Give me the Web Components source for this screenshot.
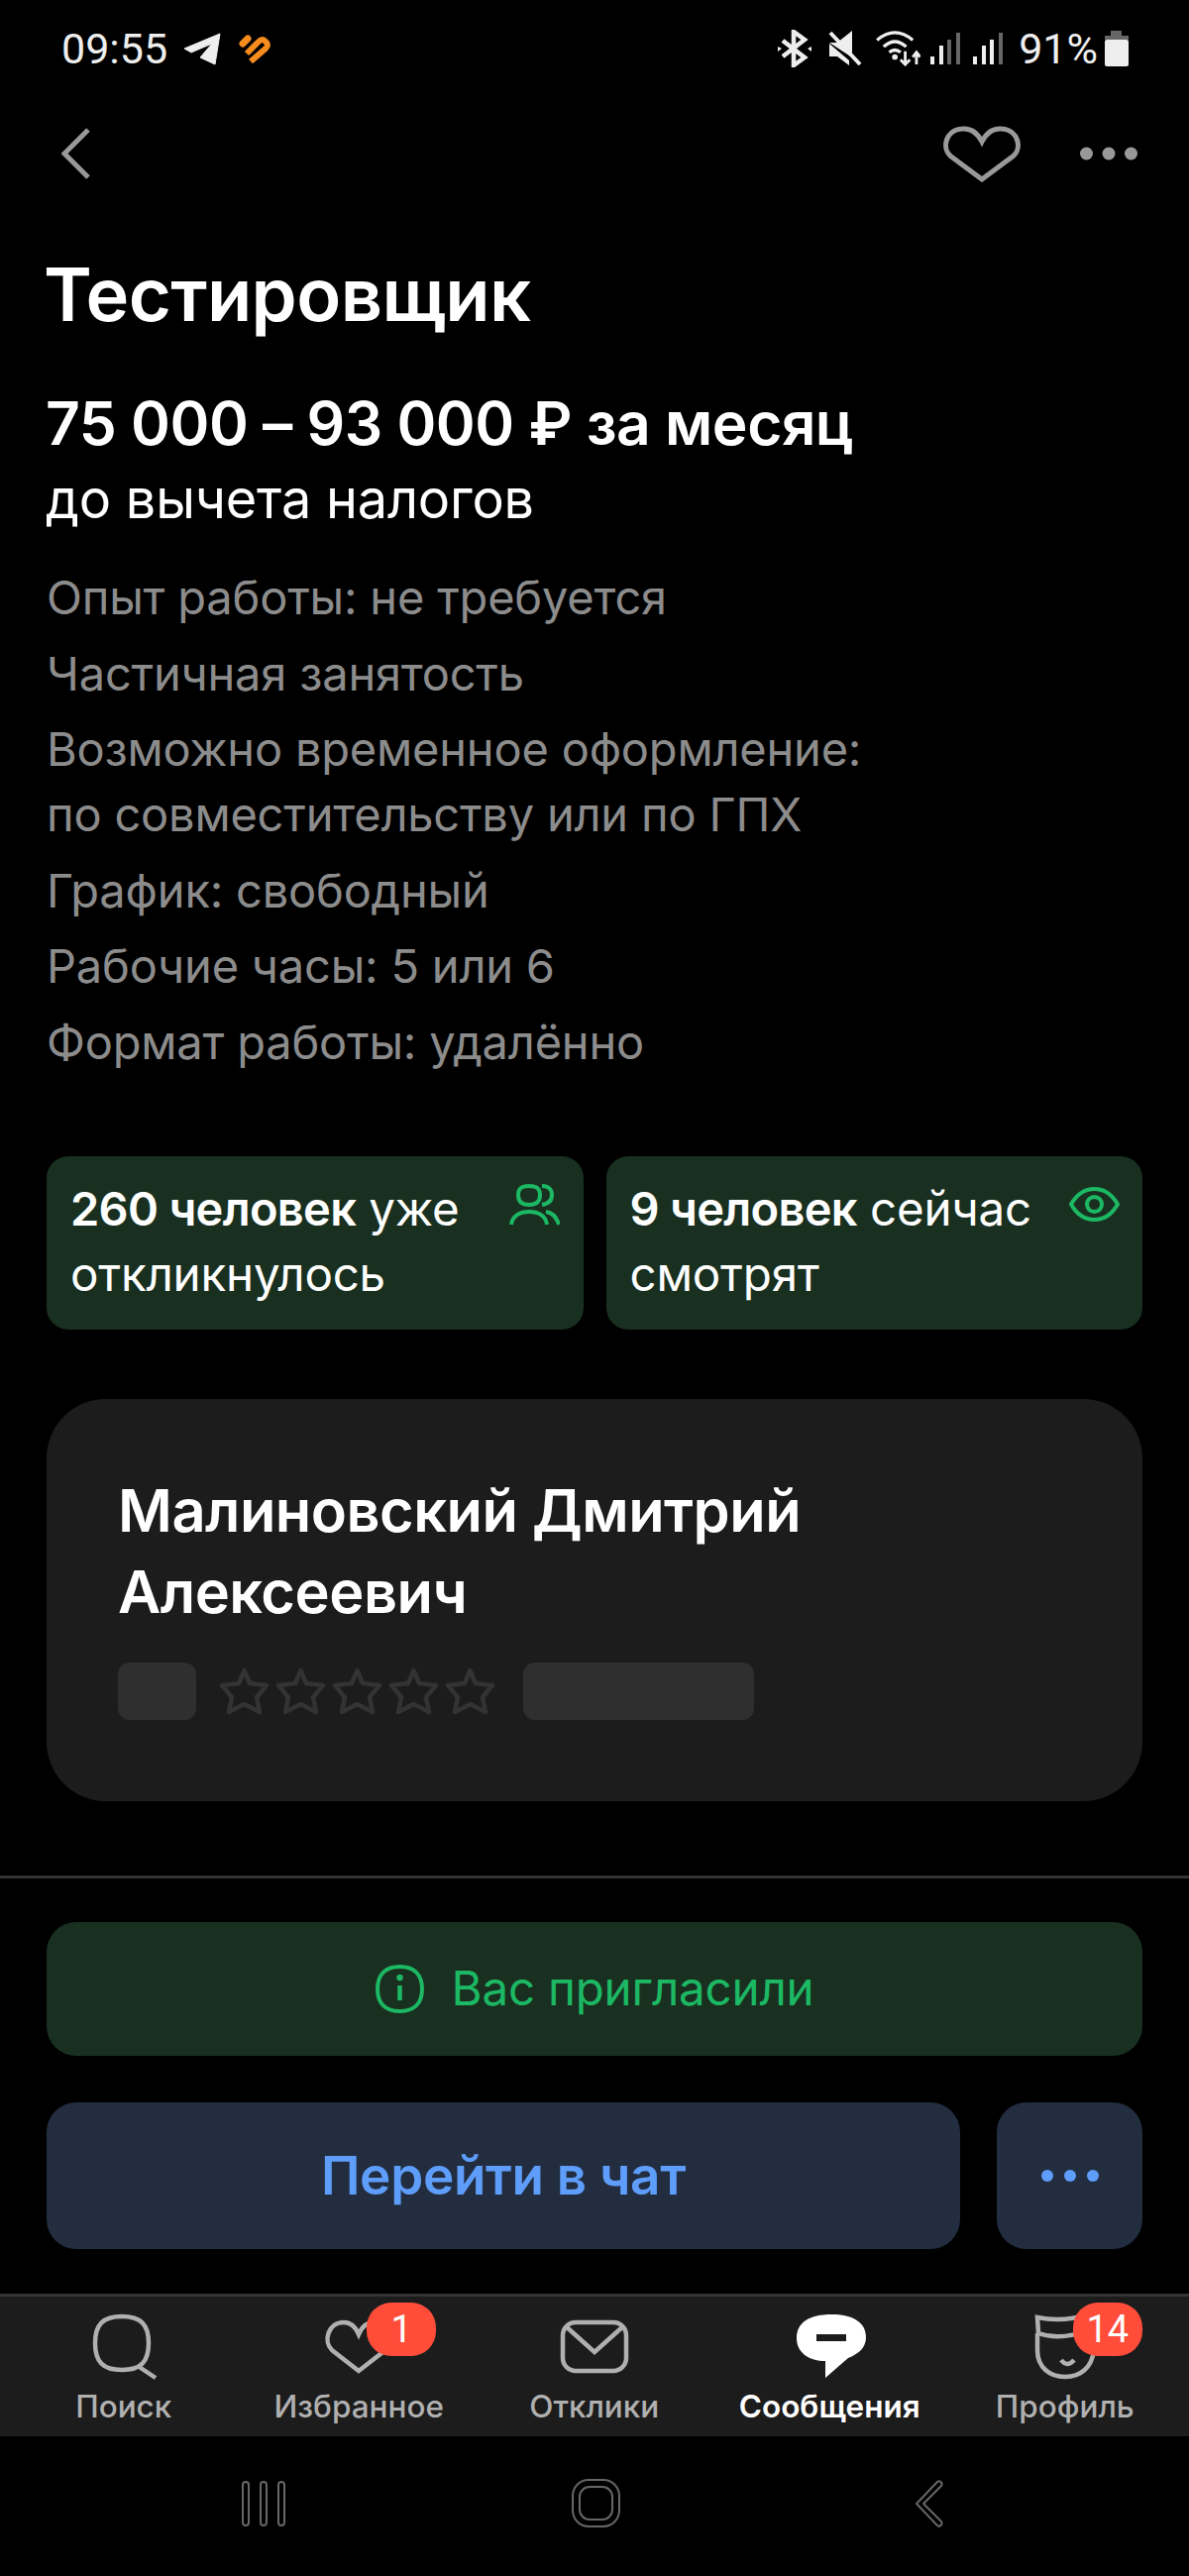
<!doctype html>
<html lang="ru">
<head>
<meta charset="utf-8">
<title>Тестировщик</title>
<style>
html, body { margin: 0; background: #000; }
body { font-family: Inter, "Noto Sans", sans-serif; color: #fff; }
</style>
</head>
<body>
<vacancy-screen>
  <status-bar slot="status"></status-bar>
  <top-bar slot="top"></top-bar>
  <vacancy-head slot="head"></vacancy-head>
  <info-chip slot="chips" icon="people"><b>260 человек</b> уже<br>откликнулось</info-chip>
  <info-chip slot="chips" icon="eye"><b>9 человек</b> сейчас<br>смотрят</info-chip>
  <employer-card slot="card">Малиновский Дмитрий<br>Алексеевич</employer-card>
  <action-bar slot="actions"></action-bar>
  <tab-bar slot="tabs"></tab-bar>
  <nav-bar slot="nav"></nav-bar>
</vacancy-screen>

<script>
"use strict";
function shadow(el, html) {
    el.attachShadow({ mode: 'open' }).innerHTML = html;
}

class VacancyScreen extends HTMLElement {
    constructor() {
        super();
        shadow(this, `
        <style>
        :host { display: flex; flex-direction: column; width: 1200px; height: 2600px; background: #000; }
        .chips { display: flex; gap: 23px; padding: 0 47px; margin-top: 82px; }
        .card { padding: 0 47px; margin-top: 70px; }
        </style>
        <slot name="status"></slot>
        <slot name="top"></slot>
        <slot name="head"></slot>
        <div class="chips"><slot name="chips"></slot></div>
        <div class="card"><slot name="card"></slot></div>
        <slot name="actions"></slot>
        <slot name="tabs"></slot>
        <slot name="nav"></slot>`);
    }
}

class StatusBar extends HTMLElement {
    constructor() {
        super();
        shadow(this, `
        <style>
        :host { display: flex; align-items: center; height: 98px; padding: 0 61px 0 62px; box-sizing: border-box; font-family: Roboto, sans-serif; font-size: 43px; color: #eee; }
        .left, .right { display: flex; align-items: center; }
        .right { margin-left: auto; }
        svg { display: block; }
        </style>
        <div class="left">
          <span>09:55</span>
          <svg style="margin-left:16px" width="38" height="33" viewBox="0 0 38 33"><path fill="#eee" stroke="#eee" stroke-linejoin="round" d="M1 16 37 1 32 32 17 25 29 11 8 20Z"/></svg>
          <svg style="margin-left:17px" width="34" height="30" viewBox="0 0 34 30" fill="none" stroke="#f78c1e" stroke-width="7" stroke-linecap="round"><path d="M5 10 10 5"/><path stroke-width="6" stroke-linecap="butt" d="M9 20 21 8Q25 4 28 8 32 11 28 15L13 28"/></svg>
        </div>
        <div class="right">
          <svg width="34" height="38" viewBox="0 0 34 38" fill="none" stroke="#eee" stroke-width="4.500"><path d="M5 11 27 28 16 36V2L27 10 5 27"/><path fill="#eee" stroke="none" d="M0 17 4 19 0 22ZM34 17 30 19 34 22Z"/></svg>
          <svg style="margin-left:17px" width="34" height="38" viewBox="0 0 34 38"><path fill="#eee" d="M1 13H9L24 1V28ZM1 14V27H9L21 36V31Z"/><path stroke="#eee" stroke-width="4" d="M2 3 32 35"/></svg>
          <svg style="margin-left:13px" width="46" height="36" viewBox="0 0 46 38" fill="none" stroke="#eee" stroke-width="3.500"><path d="M1 10Q20-6 39 10M8 17Q20 6 32 17M14 23Q20 18 26 23"/><circle cx="20" cy="28" r="3" fill="#eee" stroke="none"/><path stroke-width="3" d="M31 22V36M26 31 31 36 36 31M43 36V24M39 28 43 23 47 28"/></svg>
          <svg style="margin-left:10px" width="30" height="34" viewBox="0 0 30 34"><rect x="0" y="25" width="4" height="8" fill="#eee"/><rect x="9" y="14" width="4" height="19" fill="#eee"/><rect x="17" y="8" width="4" height="25" fill="#666"/><rect x="26" y="1" width="4" height="32" fill="#666"/></svg>
          <svg style="margin-left:13px" width="30" height="34" viewBox="0 0 30 34"><rect x="0" y="25" width="4" height="8" fill="#eee"/><rect x="9" y="14" width="4" height="19" fill="#eee"/><rect x="17" y="8" width="4" height="25" fill="#eee"/><rect x="26" y="1" width="4" height="32" fill="#666"/></svg>
          <span style="margin-left:16px">91%</span>
          <svg style="margin-left:7px" width="24" height="36" viewBox="0 0 24 36"><path fill="#666" d="M6 0H17V5H24V9H0V5H6Z"/><rect y="9" width="24" height="27" rx="2" fill="#eee"/></svg>
        </div>`);
    }
}

class TopBar extends HTMLElement {
    constructor() {
        super();
        shadow(this, `
        <style>
        :host { display: flex; align-items: center; height: 58px; margin-top: 28px; padding: 0 52px 0 62px; color: #999; }
        svg { display: block; }
        </style>
        <svg width="30" height="52" viewBox="0 0 30 52" fill="none" stroke="currentColor" stroke-width="5"><path d="M27 2 3 26 27 50"/></svg>
        <svg style="margin-left:auto" width="78" height="58" viewBox="0 0 78 58" fill="none" stroke="currentColor" stroke-width="5"><path d="M39 55 8 32C-2 24 2 5 19 4 29 3 35 9 39 17 43 9 49 3 59 4 76 5 80 24 70 32Z"/></svg>
        <svg style="margin-left:60px" width="58" height="14" viewBox="0 0 58 14" fill="currentColor"><circle cx="6.500" cy="7" r="6.500"/><circle cx="29" cy="7" r="6.500"/><circle cx="51.500" cy="7" r="6.500"/></svg>`);
    }
}

class VacancyHead extends HTMLElement {
    constructor() {
        super();
        shadow(this, `
        <style>
        :host { display: block; padding: 0 47px; }
        h1 { margin: 71px 0 0 -3px; font: 600 74px/84px Inter, sans-serif; letter-spacing: -0.6px; }
        .salary { margin: 55px 0 0 -1px; font: 600 60.500px/66px Inter, sans-serif; letter-spacing: -0.5px; }
        .tax { margin: 16px 0 0 -1px; font: 400 54px/56px Inter, sans-serif; letter-spacing: -0.2px; }
        ul { list-style: none; margin: 38px 0 0; padding: 0; color: #8c8c8c; font: 400 47px/66px Inter, sans-serif; letter-spacing: -0.2px; }
        li + li { margin-top: 10.500px; }
        </style>
        <h1>Тестировщик</h1>
        <div class="salary">75 000 – 93 000 ₽ за месяц</div>
        <div class="tax">до вычета налогов</div>
        <ul>
          <li>Опыт работы: не требуется</li>
          <li>Частичная занятость</li>
          <li>Возможно временное оформление:<br>по совместительству или по ГПХ</li>
          <li>График: свободный</li>
          <li>Рабочие часы: 5 или 6</li>
          <li>Формат работы: удалённо</li>
        </ul>`);
    }
}

const CHIP_ICONS = {
    people: '<svg style="top:28px;right:24px" width="51" height="42" viewBox="0 0 51 42" fill="none" stroke="#1cb864" stroke-width="4"><path d="M20 2C28 2 31 5 31 11S28 21 20 21 9 17 9 11 12 2 20 2Z"/><path d="M33 2C40 2 43 6 43 11S40 20 33 21M2 41C3 32 11 28 20 28S37 32 38 41M37 28C44 29 48 34 50 41"/></svg>',
    eye: '<svg style="top:31px;right:23px" width="51" height="35" viewBox="0 0 51 35" fill="none" stroke="#1cb864" stroke-width="4"><path d="M2 17.500C8 7 16 2 25.500 2S43 7 49 17.500C43 28 35 33 25.500 33S8 28 2 17.500Z"/><circle cx="25.500" cy="17.500" r="7.500"/></svg>'
};

class InfoChip extends HTMLElement {
    constructor() {
        super();
        shadow(this, `
        <style>
        :host { display: block; position: relative; flex: 1; height: 175px; box-sizing: border-box; padding: 20px 24px; border-radius: 22px; background: #193020; font: 400 47.500px/66px Inter, sans-serif; letter-spacing: -0.2px; color: #fff; white-space: nowrap; }
        ::slotted(b) { font-weight: 600; font-size: 47px; letter-spacing: -0.7px; }
        svg { position: absolute; }
        </style>
        <slot></slot>
        ${CHIP_ICONS[this.getAttribute('icon')]}`);
    }
}

class EmployerCard extends HTMLElement {
    constructor() {
        super();
        const star = '<svg width="51" height="48" viewBox="0 0 51 48" fill="none" stroke="#333" stroke-width="4.500" stroke-linejoin="round"><path d="M25.500 3 31 16 48 18 38 30 41 45 25.500 37 10 45 13 30 3 18 20 16Z"/></svg>';
        shadow(this, `
        <style>
        :host { display: block; height: 406px; box-sizing: border-box; padding: 71px 72px; border-radius: 60px; background: #1c1c1c; }
        .name { font: 600 59.500px/82px Inter, sans-serif; letter-spacing: -0.5px; }
        .row { display: flex; align-items: center; margin-top: 31px; }
        .box { height: 58px; border-radius: 12px; background: #2f2f2f; }
        .stars { display: flex; margin: 0 28px 0 23px; gap: 6px; }
        .stars svg { display: block; }
        </style>
        <div class="name"><slot></slot></div>
        <div class="row">
          <div class="box" style="width:79px"></div>
          <div class="stars">${star.repeat(5)}</div>
          <div class="box" style="width:233px"></div>
        </div>`);
    }
}

class ActionBar extends HTMLElement {
    constructor() {
        super();
        shadow(this, `
        <style>
        :host { display: block; margin-top: 75px; height: 422px; box-sizing: border-box; padding: 44px 47px 0; border-top: 3px solid #333; }
        .notice { display: flex; align-items: center; justify-content: center; gap: 28px; height: 135px; border-radius: 30px; background: #193020; color: #1cb864; font: 400 47.500px/56px Inter, sans-serif; letter-spacing: -0.2px; }
        .row { display: flex; gap: 37px; margin-top: 47px; }
        .btn { display: flex; align-items: center; justify-content: center; height: 148px; border-radius: 30px; background: #222e40; color: #5f9dfb; font: 600 53px/60px Inter, sans-serif; letter-spacing: -0.3px; }
        .main { flex: 1; }
        .more { width: 147px; }
        </style>
        <div class="notice">
          <svg width="49" height="49" viewBox="0 0 49 49" fill="none" stroke="currentColor" stroke-width="4"><path d="M24.500 2C39 2 47 10 47 24.500S39 47 24.500 47 2 39 2 24.500 10 2 24.500 2Z"/><path stroke-width="4.500" d="M24.500 21V36"/><circle cx="24.500" cy="13" r="3.200" fill="currentColor" stroke="none"/></svg>
          <span>Вас пригласили</span>
        </div>
        <div class="row">
          <div class="btn main">Перейти в чат</div>
          <div class="btn more"><svg width="58" height="12" viewBox="0 0 58 12" fill="currentColor"><circle cx="6" cy="6" r="6"/><circle cx="29" cy="6" r="6"/><circle cx="52" cy="6" r="6"/></svg></div>
        </div>`);
    }
}

const TAB_ICONS = {
    search: '<svg width="70" height="70" viewBox="0 0 70 70" fill="none" stroke="currentColor" stroke-width="4.500"><path d="M33 4C52 4 60 12 60 31S52 58 33 58 6 50 6 31 14 4 33 4Z"/><path d="M49 54 67 66"/></svg>',
    heart: '<svg width="70" height="70" viewBox="0 0 70 70" fill="none" stroke="currentColor" stroke-width="4.500"><path d="M35 59 8 38C-1 29 4 10 20 10 28 10 32 15 35 22 38 15 42 10 50 10 66 10 71 29 62 38Z"/></svg>',
    mail: '<svg width="70" height="70" viewBox="0 0 70 70" fill="none" stroke="currentColor" stroke-width="4.500"><rect x="3" y="10" width="64" height="49" rx="13"/><path d="M6 14 35 40 64 14"/></svg>',
    chat: '<svg width="70" height="70" viewBox="0 0 70 70" style="margin-left:3px"><path fill="#fff" d="M35 2C57 2 70 10 70 25 70 36 62 42 52 46L29 66V49C13 49 0 41 0 26 0 10 13 2 35 2Z"/><rect x="20" y="22" width="30" height="7" fill="#1c1c1c"/></svg>',
    face: '<svg width="70" height="70" viewBox="0 0 70 70" fill="none" stroke="currentColor" stroke-width="4.500"><path d="M7 5C22 8 40 8 58 2L58 18C40 25 22 26 8 21ZM7 21V38C7 56 20 65 35 65S62 56 64 38V25"/><path d="M31 48Q37 56 44 48"/></svg>'
};

class TabItem extends HTMLElement {
    constructor() {
        super();
        const badge = this.getAttribute('badge');
        shadow(this, `
        <style>
        :host { display: flex; flex-direction: column; align-items: center; position: relative; width: 237.500px; color: #b0b0b0; font: 500 31.500px/36px Inter, sans-serif; }
        :host([active]) { color: #fff; font-weight: 600; }
        .icon { height: 70px; margin-bottom: 7px; }
        .badge { position: absolute; top: -10px; left: calc(50% + 8px); min-width: 70px; height: 54px; box-sizing: border-box; padding: 0 6px; border-radius: 25px; background: #ff4d3a; color: #fff; font: 400 38px/54px Roboto, sans-serif; text-align: center; }
        svg { display: block; }
        </style>
        <div class="icon">${TAB_ICONS[this.getAttribute('icon')]}</div>
        <slot></slot>
        ${badge ? `<div class="badge">${badge}</div>` : ''}`);
    }
}

class TabBar extends HTMLElement {
    constructor() {
        super();
        shadow(this, `
        <style>
        :host { display: flex; height: 144px; box-sizing: border-box; padding: 16px 5px 0 6px; border-top: 3px solid #333; background: #1c1c1c; }
        </style>
        <tab-item icon="search">Поиск</tab-item>
        <tab-item icon="heart" badge="1">Избранное</tab-item>
        <tab-item icon="mail">Отклики</tab-item>
        <tab-item icon="chat" active>Сообщения</tab-item>
        <tab-item icon="face" badge="14">Профиль</tab-item>`);
    }
}

class NavBar extends HTMLElement {
    constructor() {
        super();
        shadow(this, `
        <style>
        :host { display: flex; align-items: center; height: 136px; padding: 0 0 0 243px; box-sizing: border-box; }
        svg { display: block; }
        </style>
        <svg width="46" height="46" viewBox="0 0 46 46" fill="none" stroke="#666" stroke-width="2"><rect x="2" y="1" width="6" height="44" rx="3"/><rect x="20" y="1" width="6" height="44" rx="3"/><rect x="38" y="1" width="6" height="44" rx="3"/></svg>
        <svg style="margin-left:288px" width="50" height="50" viewBox="0 0 50 50" fill="none" stroke="#666" stroke-width="2"><rect x="1" y="1" width="47" height="47" rx="16"/><rect x="8" y="8" width="33" height="33" rx="10"/></svg>
        <svg style="margin-left:296px" width="30" height="48" viewBox="0 0 30 48" fill="none" stroke="#666" stroke-width="2" stroke-linejoin="round"><path d="M23 2C25 0 29 3 27 6L9 24 27 42C29 45 25 48 23 46L2 24Z"/></svg>`);
    }
}

customElements.define('tab-item', TabItem);
customElements.define('vacancy-screen', VacancyScreen);
customElements.define('status-bar', StatusBar);
customElements.define('top-bar', TopBar);
customElements.define('vacancy-head', VacancyHead);
customElements.define('info-chip', InfoChip);
customElements.define('employer-card', EmployerCard);
customElements.define('action-bar', ActionBar);
customElements.define('tab-bar', TabBar);
customElements.define('nav-bar', NavBar);
</script>
</body>
</html>
